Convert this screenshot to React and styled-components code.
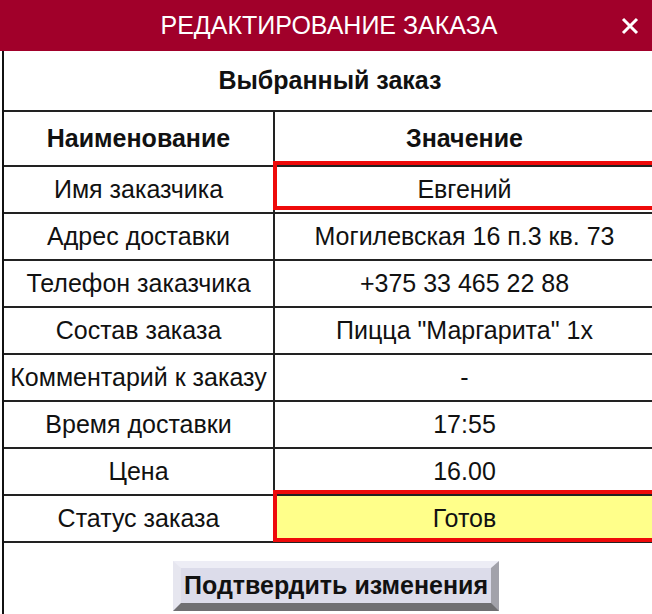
import React from 'react';
import styled, { createGlobalStyle } from 'styled-components';

const GlobalStyle = createGlobalStyle`
  html, body {
    margin: 0;
    padding: 0;
    overflow: hidden;
    background: #fff;
  }
  body {
    font-family: "Liberation Sans", Arial, sans-serif;
    color: #111;
  }
`;

const Dialog = styled.div`
  width: 652px;
  height: 614px;
  display: flex;
  flex-direction: column;
`;

const Header = styled.div`
  height: 51px;
  background: #a1002a;
  color: #fff;
  display: grid;
  grid-template-columns: 40px 1fr 40px;
  align-items: center;
  padding-left: 8px;
  padding-right: 2px;
`;

const HeaderTitle = styled.h1`
  grid-column: 2;
  margin: 0;
  text-align: center;
  font-size: 25px;
  font-weight: normal;
  white-space: nowrap;
`;

const CloseButton = styled.button`
  grid-column: 3;
  justify-self: center;
  width: 28px;
  height: 28px;
  padding: 0;
  border: none;
  background: none;
  display: flex;
  align-items: center;
  justify-content: center;
  cursor: pointer;
`;

const Body = styled.div`
  flex: 1;
  margin-left: 2px;
  border-left: 2px solid #111;
  display: flex;
  flex-direction: column;
`;

const Caption = styled.div`
  height: 59px;
  padding-left: 4px;
  display: flex;
  align-items: center;
  justify-content: center;
  font-size: 25px;
  font-weight: bold;
`;

const Table = styled.table`
  width: 650px;
  border-collapse: collapse;
  table-layout: fixed;
`;

const Cell = styled.td`
  position: relative;
  height: ${(p) => (p.$head ? '53px' : '45px')};
  padding: 0;
  text-align: center;
  vertical-align: middle;
  white-space: nowrap;
  font-size: 25px;
  font-weight: ${(p) => (p.$head ? 'bold' : 'normal')};
  border-top: 2px solid #222;
  border-bottom: 2px solid #222;
  border-left: 2px solid #222;
  background: ${(p) => (p.$yellow ? '#ffff8a' : 'transparent')};

  &:first-child {
    border-left: none;
    width: 269px;
  }
`;

/* red frame of the edited field, drawn over the grid lines */
const Marked = styled(Cell)`
  &::after {
    content: '';
    position: absolute;
    z-index: 2;
    left: -2px;
    right: -4px;
    top: -6px;
    bottom: ${(p) => p.$frameBottom}px;
    border: 4px solid #ee0a0a;
    pointer-events: none;
  }
`;

const Footer = styled.div`
  flex: 1;
  display: flex;
  justify-content: center;
  padding-top: 18px;
  padding-left: 16px;
`;

const ConfirmButton = styled.button`
  height: 50px;
  padding: 0 3px;
  font-family: "Liberation Sans", Arial, sans-serif;
  font-size: 25px;
  font-weight: bold;
  color: #111;
  background: #dcdcea;
  border-style: solid;
  border-width: 7px 8px 8px 8px;
  border-color: #ededf5 #a2a2aa #6f6f72 #e6e6ef;
  cursor: pointer;
`;

const rows = [
  { name: 'Имя заказчика', value: 'Евгений', frame: 2 },
  { name: 'Адрес доставки', value: 'Могилевская 16 п.3 кв. 73' },
  { name: 'Телефон заказчика', value: '+375 33 465 22 88' },
  { name: 'Состав заказа', value: 'Пицца "Маргарита" 1x' },
  { name: 'Комментарий к заказу', value: '-' },
  { name: 'Время доставки', value: '17:55' },
  { name: 'Цена', value: '16.00' },
  { name: 'Статус заказа', value: 'Готов', frame: -1, yellow: true },
];

const App = () => {
  return (
    <Dialog>
      <GlobalStyle />
      <Header>
        <HeaderTitle>РЕДАКТИРОВАНИЕ ЗАКАЗА</HeaderTitle>
        <CloseButton aria-label="Закрыть">
          <svg width="18" height="18" viewBox="0 0 18 18">
            <path d="M2 2 L16 16 M16 2 L2 16" stroke="#fff" strokeWidth="3" />
          </svg>
        </CloseButton>
      </Header>
      <Body>
        <Caption>Выбранный заказ</Caption>
        <Table>
          <tbody>
            <tr>
              <Cell $head>Наименование</Cell>
              <Cell $head>Значение</Cell>
            </tr>
            {rows.map((row) => (
              <tr key={row.name}>
                <Cell>{row.name}</Cell>
                {row.frame !== undefined ? (
                  <Marked $frameBottom={row.frame} $yellow={row.yellow}>
                    {row.value}
                  </Marked>
                ) : (
                  <Cell>{row.value}</Cell>
                )}
              </tr>
            ))}
          </tbody>
        </Table>
        <Footer>
          <ConfirmButton>Подтвердить изменения</ConfirmButton>
        </Footer>
      </Body>
    </Dialog>
  );
};

export default App;
